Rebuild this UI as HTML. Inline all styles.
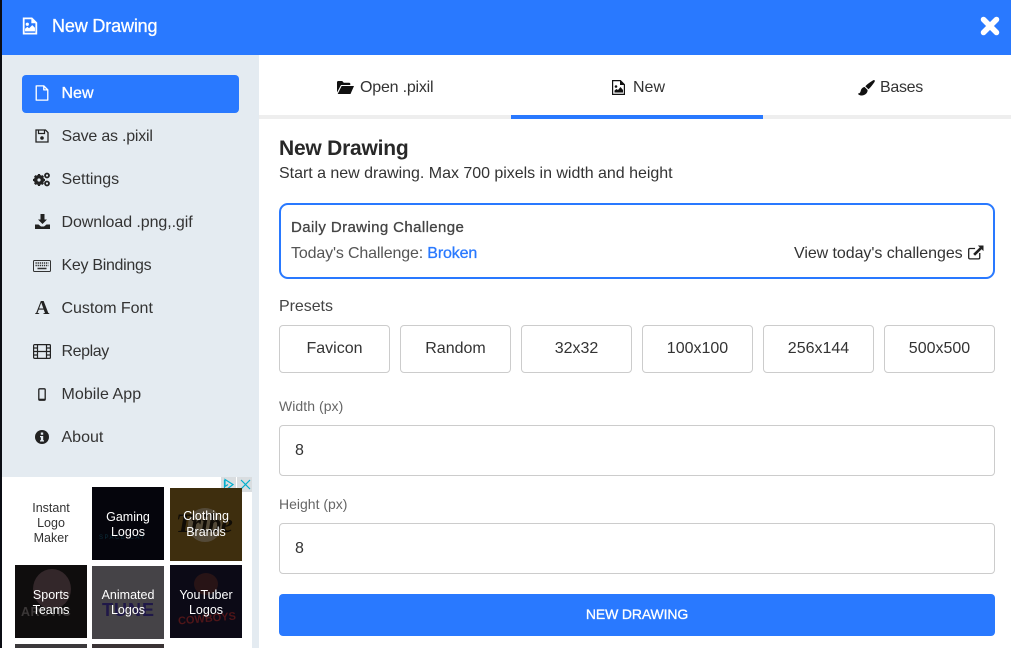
<!DOCTYPE html>
<html lang="en"><head><meta charset="utf-8"><title>New Drawing</title>
<style>
*{box-sizing:border-box}
html,body{margin:0;padding:0}
body{width:1011px;height:648px;overflow:hidden;position:relative;background:#fff;font-family:"Liberation Sans",Arial,sans-serif;color:#333}
.a,.t{position:absolute}
.t{white-space:nowrap;line-height:20px;height:20px}
.m{-webkit-text-stroke:.3px currentColor}
svg{position:absolute;display:block}
.side{font-size:16px;color:#333;left:62px}
.box{position:absolute;background:#fff;border:1px solid #ccc;border-radius:4px}
.pre{top:325px;width:111px;height:48px;font-size:16px;line-height:46px;text-align:center;color:#333}
.tile{position:absolute;width:72px;height:73px;overflow:hidden;color:#fff;font-size:12.5px;line-height:15px;text-align:center}
.tile b{position:absolute;left:0;right:0;font-weight:400}
.tile i{position:absolute;font-style:normal;white-space:nowrap}
</style></head><body>
<div class="a" style="left:0;top:0;width:2px;height:648px;background:#0b0d14"></div>
<div class="a" style="left:2px;top:0;width:1009px;height:55px;background:#2979ff"></div>
<svg style="left:22px;top:17px" width="16" height="18" viewBox="0 0 17 20"><path fill="none" stroke="#fff" stroke-width="2" d="M1.500 1.500h9l5 5v12h-14z"/><path fill="#fff" d="M10 1l6 6h-6z"/><circle cx="5.500" cy="8" r="1.800" fill="#fff"/><path fill="#fff" d="M3 16v-3l2.500-2 2 1.500 3.500-3.500 3 3V16z"/></svg>
<div class="t m" style="left:52px;top:16px;font-size:18px;color:#fff;letter-spacing:-.15px">New Drawing</div>
<svg style="left:980px;top:16px" width="20" height="20" viewBox="0 0 20 20"><path stroke="#fff" stroke-width="5.500" stroke-linecap="round" d="M3.500 3.500l13 13M16.500 3.500l-13 13"/></svg>

<div class="a" style="left:2px;top:55px;width:257px;height:593px;background:#e4ebf1"></div>
<div class="a" style="left:22px;top:75px;width:217px;height:38px;background:#2979ff;border-radius:4px"></div>
<svg style="left:35px;top:85px" width="14" height="16" viewBox="0 0 15 18"><path fill="none" stroke="#fff" stroke-width="1.500" stroke-linejoin="round" d="M1 1h8.500L14 5.500V17H1zM9.500 1v4.500H14"/></svg>
<div class="t m side" style="top:84px;color:#fff;left:61.500px">New</div>
<svg style="left:35px;top:129px" width="14" height="14" viewBox="0 0 14 14"><path fill="none" stroke="#222" stroke-width="1.300" d="M1 1h9.500L13 3.500V13H1z"/><path fill="none" stroke="#222" stroke-width="1.200" d="M3.500 1v3.500h6V1"/><circle cx="7" cy="9" r="1.800" fill="#222"/></svg>
<div class="t side" style="top:127px;left:61.500px;letter-spacing:-.22px">Save as .pixil</div>
<svg style="left:33px;top:172px" width="18" height="15" viewBox="0 0 18 15"><circle cx="6" cy="8" r="3.600" fill="none" stroke="#222" stroke-width="3"/><path stroke="#222" stroke-width="2.200" d="M6 2v12M0 8h12M1.800 3.800l8.400 8.400M10.200 3.800l-8.400 8.400"/><circle cx="6" cy="8" r="1.600" fill="#e4ebf1"/><circle cx="14" cy="3.500" r="2" fill="none" stroke="#222" stroke-width="1.800"/><circle cx="14" cy="11.500" r="2" fill="none" stroke="#222" stroke-width="1.800"/></svg>
<div class="t side" style="top:170px;left:61.500px;letter-spacing:-.02px">Settings</div>
<svg style="left:35px;top:214px" width="15" height="15" viewBox="0 0 15 15"><path fill="#222" d="M5.500 0h4v5.500H12L7.500 10 3 5.500h2.500zM0 10.500h3.500l2.500 2h3l2.500-2H15V15H0z"/></svg>
<div class="t side" style="top:213px;left:61.500px;letter-spacing:-.08px">Download .png,.gif</div>
<svg style="left:33px;top:260px" width="18" height="12" viewBox="0 0 18 12"><rect x=".5" y=".5" width="17" height="11" rx="1" fill="none" stroke="#333"/><path stroke="#333" stroke-width="1.500" stroke-dasharray="1.300 .8" d="M2.500 3h13M2.500 5.500h13"/><path stroke="#333" stroke-width="1.500" d="M4.500 8.500h9"/></svg>
<div class="t side" style="top:256px;left:61.500px;letter-spacing:-.3px">Key Bindings</div>
<div class="t" style="left:35px;top:298px;font:bold 20px/21px 'Liberation Serif',serif;color:#222;height:21px">A</div>
<div class="t side" style="top:299px;left:61.500px;letter-spacing:-.02px">Custom Font</div>
<svg style="left:33px;top:344px" width="18" height="15" viewBox="0 0 18 15"><rect x=".6" y=".6" width="16.800" height="13.800" rx="1" fill="none" stroke="#222" stroke-width="1.200"/><path stroke="#222" stroke-width="1.200" fill="none" d="M4.500 1v13M13.500 1v13M4.500 7.500h9M1 4h3.500M1 7.500h3.500M1 11h3.500M13.500 4H17M13.500 7.500H17M13.500 11H17"/></svg>
<div class="t side" style="top:342px;left:61.500px;letter-spacing:-.4px">Replay</div>
<svg style="left:38px;top:388px" width="8" height="13" viewBox="0 0 8 13"><rect x=".8" y=".8" width="6.400" height="11.400" rx="1" fill="none" stroke="#222" stroke-width="1.300"/><path stroke="#222" stroke-width="1.600" d="M1 11.500h6"/></svg>
<div class="t side" style="top:385px;left:61.500px;letter-spacing:.05px">Mobile App</div>
<svg style="left:35px;top:430px" width="14" height="14" viewBox="0 0 14 14"><circle cx="7" cy="7" r="7" fill="#222"/><path fill="#e4ebf1" d="M5.800 2.500h2.400v2.200H5.800zM5 6h3.200v4.200H9v1.300H5v-1.300h.9V7.300H5z"/></svg>
<div class="t side" style="top:428px;left:61.500px;letter-spacing:0">About</div>

<div class="a" style="left:2px;top:477px;width:250px;height:171px;background:#fff"></div>
<div class="a" style="left:221px;top:477px;width:15px;height:15px;background:#d9dde0"></div>
<div class="a" style="left:237px;top:477px;width:15px;height:15px;background:#d9dde0"></div>
<svg style="left:221px;top:477px" width="31" height="15" viewBox="0 0 31 15"><path fill="none" stroke="#00aecd" stroke-width="1.200" d="M3.500 3v9.500h2L12 7.500 4 2.500v7l3-2"/><path fill="none" stroke="#00aecd" stroke-width="1.200" d="M20 3l9 9M29 3l-9 9"/></svg>

<div class="t" style="left:15px;top:501px;width:72px;height:46px;white-space:normal;text-align:center;font-size:12.500px;line-height:15px;color:#333">Instant<br>Logo<br>Maker</div>
<div class="tile" style="left:92px;top:487px;background:#05050c"><i style="left:7px;top:47px;font-size:6px;line-height:8px;letter-spacing:1.500px;color:#0d2f3c">SPACE CAT</i><b style="top:23px">Gaming</b><b style="top:38px">Logos</b></div>
<div class="tile" style="left:170px;top:488px;background:#3e2e0e"><div class="a" style="left:18px;top:20px;width:34px;height:34px;border-radius:50%;background:#544a38"></div><i style="left:6px;top:22px;font:italic bold 26px/28px 'Liberation Serif',serif;color:#100c06">Tribe</i><b style="top:21px">Clothing</b><b style="top:37px">Brands</b></div>
<div class="tile" style="left:15px;top:565px;background:#0f0d0d"><div class="a" style="left:18px;top:4px;width:38px;height:40px;border-radius:50%;background:#33272a"></div><i style="left:6px;top:40px;font:bold 12.500px/14px 'Liberation Sans',sans-serif;letter-spacing:.5px;color:#3b3737">ARCTIC</i><b style="top:23px">Sports</b><b style="top:38px">Teams</b></div>
<div class="tile" style="left:92px;top:566px;background:#454347"><i style="left:10px;top:34px;font:bold 18px/20px 'Liberation Sans',sans-serif;letter-spacing:1px;color:#1f1848">TUNE</i><b style="top:22px">Animated</b><b style="top:37px">Logos</b></div>
<div class="tile" style="left:170px;top:565px;background:#0c0a16"><div class="a" style="left:24px;top:8px;width:24px;height:22px;border-radius:50%;background:#281416"></div><i style="left:8px;top:48px;font:bold 11px/13px 'Liberation Sans',sans-serif;color:#4f1518;transform:rotate(-5deg)">COWBOYS</i><b style="top:23px">YouTuber</b><b style="top:38px">Logos</b></div>
<div class="a" style="left:15px;top:644px;width:72px;height:4px;background:#3b393b"></div>
<div class="a" style="left:92px;top:644px;width:72px;height:4px;background:#3a3335"></div>

<div class="a" style="left:259px;top:115px;width:752px;height:4px;background:#eee"></div>
<div class="a" style="left:511px;top:115px;width:252px;height:4px;background:#2979ff"></div>
<svg style="left:337px;top:81px" width="17" height="13" viewBox="0 0 17 13"><path fill="#111" d="M0 11.500V1.200C0 .5.500 0 1.200 0h4l1.600 1.700h5.400c.6 0 1.100.5 1.100 1.100V4H4L0 11.500zM4.600 5H17l-3.500 8H.7z"/></svg>
<div class="t" style="left:360px;top:78px;font-size:16px;color:#333;letter-spacing:-.2px">Open .pixil</div>
<svg style="left:612px;top:80px" width="13" height="15" viewBox="0 0 13 15"><path fill="none" stroke="#111" stroke-width="1.200" d="M.6.600h7.800l4 4v9.800H.6z"/><path fill="#111" d="M8 .6l4.400 4.400H8zM2.500 12.500v-2l2-1.500 1.500 1 2.500-3 2.500 3v2.500z"/><circle cx="4" cy="6.500" r="1.300" fill="#111"/></svg>
<div class="t" style="left:633px;top:78px;font-size:16px;color:#333">New</div>
<svg style="left:858px;top:80px" width="17" height="16" viewBox="0 0 17 16"><path fill="#111" d="M16.500.2c.5.400.4 1.100 0 1.800-1.600 2.500-4 5.400-6 7.300L7.300 6.200C9.500 4 12.500 1.800 15 .4c.6-.3 1.100-.5 1.500-.2zM6.600 7l3 3c.1 3-2.400 5.500-6 5.500C2 15.500 0 14.700 0 13.500c1.500 0 2.300-.8 2.700-2.500.5-2.300 2-3.800 3.900-4z"/></svg>
<div class="t" style="left:880px;top:78px;font-size:16px;color:#333;letter-spacing:-.3px">Bases</div>

<div class="t" style="left:279px;top:138px;font-size:21px;font-weight:700;color:#282828;letter-spacing:-.22px;height:22px;line-height:22px">New Drawing</div>
<div class="t" style="left:279px;top:164px;font-size:16px;color:#333;letter-spacing:-.025px">Start a new drawing. Max 700 pixels in width and height</div>

<div class="a" style="left:279px;top:203px;width:716px;height:76px;border:2px solid #2979ff;border-radius:9px"></div>
<div class="t m" style="left:291px;top:218px;font-size:15px;color:#444;letter-spacing:.39px">Daily Drawing Challenge</div>
<div class="t" style="left:291px;top:244px;font-size:16px;color:#555;letter-spacing:-.15px">Today's Challenge: <span class="m" style="color:#2979ff">Broken</span></div>
<div class="t" style="left:794px;top:244px;font-size:16px;color:#333;letter-spacing:-.06px">View today's challenges</div>
<svg style="left:968px;top:245px" width="16" height="15" viewBox="0 0 17 16"><path fill="none" stroke="#222" stroke-width="1.400" d="M12.500 8.500v5c0 .8-.6 1.300-1.300 1.300H2c-.7 0-1.300-.6-1.300-1.300V5c0-.7.600-1.300 1.300-1.300h5.500"/><path fill="#222" d="M10.500.5H16.500v6L14.500 4.500 7.500 11.500 5.500 9.500l7-7z"/></svg>

<div class="t" style="left:279px;top:297px;font-size:16px;color:#444;letter-spacing:-.05px">Presets</div>
<div class="box pre" style="left:279px">Favicon</div>
<div class="box pre" style="left:400px">Random</div>
<div class="box pre" style="left:521px">32x32</div>
<div class="box pre" style="left:642px">100x100</div>
<div class="box pre" style="left:763px">256x144</div>
<div class="box pre" style="left:884px">500x500</div>

<div class="t" style="left:279px;top:396px;font-size:14px;color:#666;letter-spacing:.05px">Width (px)</div>
<div class="box" style="left:279px;top:425px;width:716px;height:51px"></div>
<div class="t" style="left:295px;top:441px;font-size:16px;color:#333">8</div>
<div class="t" style="left:279px;top:494px;font-size:14px;color:#666;letter-spacing:0">Height (px)</div>
<div class="box" style="left:279px;top:523px;width:716px;height:51px"></div>
<div class="t" style="left:295px;top:539px;font-size:16px;color:#333">8</div>
<div class="a" style="left:279px;top:594px;width:716px;height:42px;background:#2979ff;border-radius:4px"></div>
<div class="t m" style="left:279px;width:716px;top:604px;text-align:center;font-size:14px;color:#fff;letter-spacing:-.14px">NEW DRAWING</div>
</body></html>
